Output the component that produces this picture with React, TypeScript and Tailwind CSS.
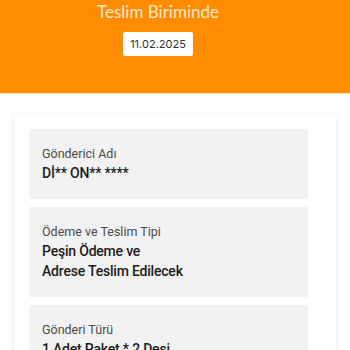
const rows = [
  { label: "Gönderici Adı", value: ["Dİ** ON** ****"] },
  { label: "Ödeme ve Teslim Tipi", value: ["Peşin Ödeme ve", "Adrese Teslim Edilecek"] },
  { label: "Gönderi Türü", value: ["1 Adet Paket * 2 Desi"] },
];

export default function App() {
  return (
    <div className="h-[350px] w-[350px] overflow-hidden bg-white font-['Roboto',sans-serif]">
      {/* header */}
      <div className="flex h-[93px] flex-col items-center bg-[#ff8b00] pr-[34px] pt-[1px] shadow-[0_1px_1px_rgba(255,200,120,0.5)]">
        <div className="font-['Lato',sans-serif] text-[17px] leading-[21px] text-[#fde8cc]">
          Teslim Biriminde
        </div>
        <div className="mt-[10px] flex h-[24px] w-[70px] items-center justify-center rounded-[2px] bg-white font-['Inter',sans-serif] text-[11px] text-[#333]">
          11.02.2025
        </div>
      </div>

      {/* card */}
      <div className="mx-[14px] mt-[22px] rounded-[2px] bg-white pl-[15px] pr-[28px] pt-[14px] shadow-[0_0_6px_rgba(0,0,0,0.08)]">
        <div className="flex flex-col gap-[8px]">
          {rows.map((r) => (
            <div key={r.label} className="bg-[#f2f2f2] px-[13px] py-[16px]">
              <div className="text-[12.5px] leading-[18px] text-[#4a4a4a]">{r.label}</div>
              <div className="text-[14px] font-medium leading-[20px] tracking-[-0.2px] text-[#1c1c1c]">
                {r.value.map((v) => (
                  <div key={v}>{v}</div>
                ))}
              </div>
            </div>
          ))}
        </div>
      </div>
    </div>
  );
}
